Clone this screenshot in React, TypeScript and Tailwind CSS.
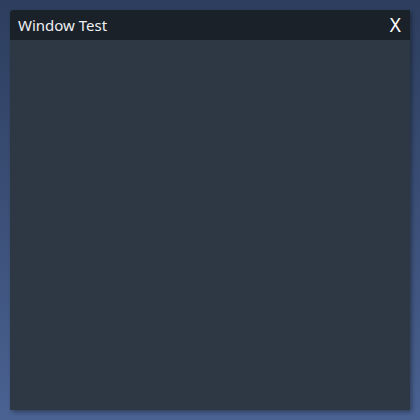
export default function App() {
  return (
    <div className="w-[420px] h-[420px] bg-gradient-to-b from-[#2d3e5e] to-[#4a6292] p-[10px]" style={{ fontFamily: '"Noto Sans", "Open Sans", sans-serif' }}>
      <div className="w-[400px] h-[400px] flex flex-col bg-[#2e3744] rounded-tl-[4px] shadow-[2px_2px_4px_rgba(0,0,0,0.35)] overflow-hidden">
        <div className="h-[30px] bg-[#1b2129] flex items-center justify-between pl-[8px] pr-[9px]">
          <span className="text-[15px] text-[#eef0f3]">Window Test</span>
          <span className="text-[19px] text-white leading-none">X</span>
        </div>
        <div className="flex-1" />
      </div>
    </div>
  );
}
